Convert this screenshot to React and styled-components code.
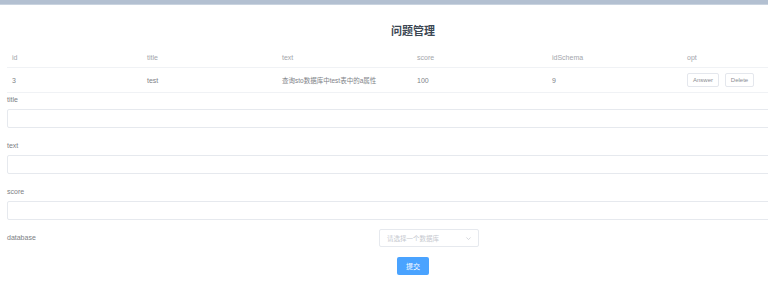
import styled, { createGlobalStyle } from "styled-components";

const GlobalStyle = createGlobalStyle`
  html, body {
    margin: 0;
    padding: 0;
    background: #fff;
    overflow: hidden;
  }
  body {
    font-family: "Liberation Sans", "Noto Sans CJK SC", sans-serif;
  }
`

const TopBar = styled.div`
  height: 5px;
  background: #b3c0d1;
  border-bottom: 1px solid #c9d3df;
  box-sizing: border-box;
`

const Page = styled.div`
  width: 812px;
  margin-left: 7px;
`

const Title = styled.h2`
  margin: 0;
  padding: 19px 0 9px;
  line-height: 14px;
  font-size: 11px;
  font-weight: bold;
  color: #3c4753;
  text-align: center;
`

const Table = styled.div`
  width: 100%;
`

const Row = styled.div`
  display: grid;
  grid-template-columns: repeat(6, 135px);
  height: ${p => p.$height}px;
  align-items: center;
  border-bottom: 1px solid #f0f2f5;
  box-sizing: border-box;
`

const Cell = styled.div`
  padding-left: 5px;
  font-size: ${p => (p.$cjk ? 6.5 : 7)}px;
  color: ${p => (p.$head ? "#a3a6ab" : "#808388")};
  white-space: nowrap;
  display: flex;
  gap: 6px;
  align-items: center;
`

const SmallBtn = styled.button`
  height: 14px;
  width: ${p => p.$w}px;
  padding: 0;
  border: 1px solid #e4e7ed;
  border-radius: 2px;
  background: #fff;
  color: #8a8d92;
  font-family: inherit;
  font-size: 6px;
`

const Form = styled.div`
  padding-top: 2px;
`

const Field = styled.div`
  display: flex;
  flex-direction: column;
  gap: 4px;
  margin-bottom: 13px;
`

const Label = styled.label`
  font-size: 7px;
  line-height: 10px;
  color: #7d8085;
`

const Input = styled.div`
  height: 19px;
  border: 1px solid #e6e9ee;
  border-radius: 2px;
  box-sizing: border-box;
`

const SelectRow = styled.div`
  display: grid;
  grid-template-columns: 32px 1fr;
  align-items: center;
  height: 18px;
  margin-top: -4px;
`

const Select = styled.div`
  justify-self: center;
  width: 100px;
  height: 18px;
  border: 1px solid #e6e9ee;
  border-radius: 2px;
  box-sizing: border-box;
  display: flex;
  align-items: center;
  justify-content: space-between;
  padding: 0 6px 0 7px;
  font-size: 6.5px;
  color: #c6c9cf;
`

const Actions = styled.div`
  display: flex;
  justify-content: center;
  margin-top: 10px;
`

const SubmitBtn = styled.button`
  width: 32px;
  height: 18px;
  padding: 0;
  border: none;
  border-radius: 2px;
  background: #4aa3ff;
  color: #fff;
  font-family: inherit;
  font-size: 7px;
`

const heads = ["id", "title", "text", "score", "idSchema", "opt"]

const App = () => {
  return <>
    <GlobalStyle />
    <TopBar />
    <Page>
      <Title>问题管理</Title>
      <Table>
        <Row $height={21}>
          {heads.map(h => <Cell $head key={h}>{h}</Cell>)}
        </Row>
        <Row $height={25}>
          <Cell>3</Cell>
          <Cell>test</Cell>
          <Cell $cjk>查询sto数据库中test表中的a属性</Cell>
          <Cell>100</Cell>
          <Cell>9</Cell>
          <Cell>
            <SmallBtn $w={32}>Answer</SmallBtn>
            <SmallBtn $w={29}>Delete</SmallBtn>
          </Cell>
        </Row>
      </Table>

      <Form>
        <Field>
          <Label>title</Label>
          <Input />
        </Field>
        <Field>
          <Label>text</Label>
          <Input />
        </Field>
        <Field>
          <Label>score</Label>
          <Input />
        </Field>
        <SelectRow>
          <Label>database</Label>
          <Select>
            <span>请选择一个数据库</span>
            <svg width="7" height="7" viewBox="0 0 10 10">
              <path d="M2 3.5 L5 6.5 L8 3.5" fill="none" stroke="#c6c9cf" strokeWidth="1" />
            </svg>
          </Select>
        </SelectRow>
        <Actions>
          <SubmitBtn>提交</SubmitBtn>
        </Actions>
      </Form>
    </Page>
  </>;
};

export default App;
